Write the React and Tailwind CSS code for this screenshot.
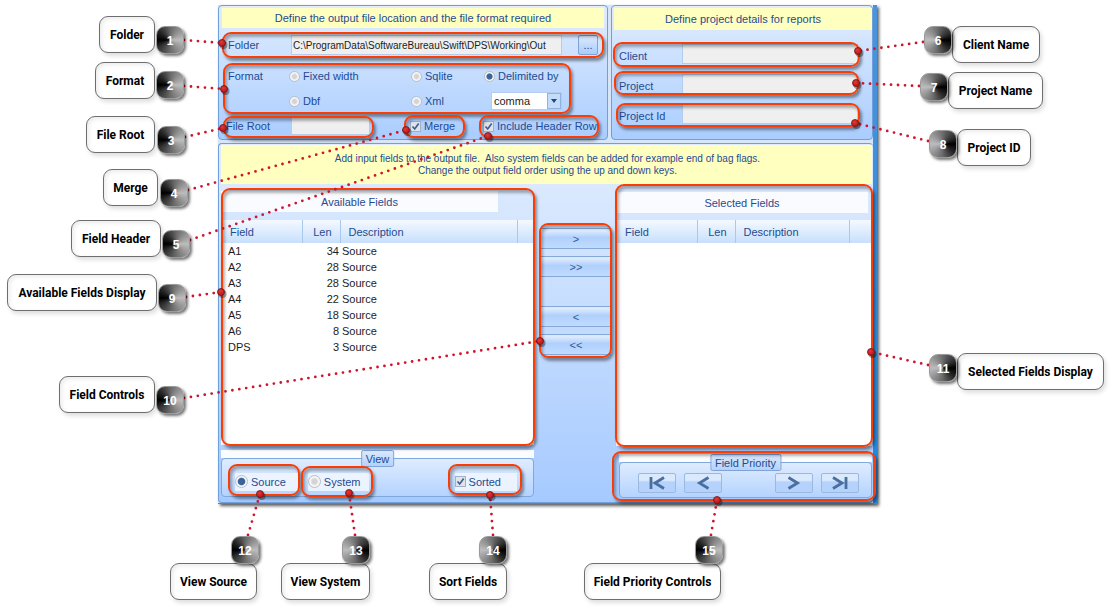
import React from "react";

const callouts = [
  { n: 1, text: "Folder", box: "left-[99px] top-4 w-14", badge: "left-[156px] top-[26px]", dark: "left", line: [184, 40, 222, 43] },
  { n: 2, text: "Format", box: "left-[95px] top-[62px] w-[60px]", badge: "left-[156px] top-[71px]", dark: "left", line: [184, 86, 224, 89] },
  { n: 3, text: "File Root", box: "left-[86px] top-[116px] w-[69px]", badge: "left-[157px] top-[126px]", dark: "left", line: [185, 137, 223, 128] },
  { n: 4, text: "Merge", box: "left-[103px] top-[169px] w-[55px]", badge: "left-[160px] top-[179px]", dark: "left", line: [188, 190, 406, 130] },
  { n: 5, text: "Field Header", box: "left-[71px] top-[220px] w-[90px]", badge: "left-[162px] top-[230px]", dark: "left", line: [190, 240, 488, 136] },
  { n: 9, text: "Available Fields Display", box: "left-[7px] top-[274px] w-[150px]", badge: "left-[158px] top-[284px]", dark: "left", line: [186, 297, 221, 292] },
  { n: 10, text: "Field Controls", box: "left-[59px] top-[376px] w-24", badge: "left-[156px] top-[386px]", dark: "left", line: [184, 398, 540, 341] },
  { n: 6, text: "Client Name", box: "left-[952px] top-[26px] w-[88px]", badge: "left-[924px] top-[26px]", dark: "right", line: [923, 42, 858, 51] },
  { n: 7, text: "Project Name", box: "left-[948px] top-[72px] w-[95px]", badge: "left-[920px] top-[73px]", dark: "right", line: [919, 86, 856, 83] },
  { n: 8, text: "Project ID", box: "left-[957px] top-[129px] w-[74px]", badge: "left-[929px] top-[130px]", dark: "right", line: [928, 141, 855, 123] },
  { n: 11, text: "Selected Fields Display", box: "left-[957px] top-[353px] w-[147px]", badge: "left-[929px] top-[354px]", dark: "right", line: [928, 365, 871, 352] },
  { n: 12, text: "View Source", box: "left-[170px] top-[563px] w-[87px]", badge: "left-[231px] top-[536px]", dark: "left", line: [248, 535, 260, 494] },
  { n: 13, text: "View System", box: "left-[281px] top-[563px] w-[89px]", badge: "left-[342px] top-[536px]", dark: "right", line: [355, 535, 349, 493] },
  { n: 14, text: "Sort Fields", box: "left-[429px] top-[563px] w-[78px]", badge: "left-[479px] top-[536px]", dark: "right", line: [493, 535, 490, 495] },
  { n: 15, text: "Field Priority Controls", box: "left-[584px] top-[563px] w-[137px]", badge: "left-[695px] top-[536px]", dark: "left", line: [711, 535, 717, 500] },
];

const outlines = [
  "left-[222px] top-8 w-[382px] h-[26px]",
  "left-[223px] top-[63px] w-[348px] h-[51px]",
  "left-[223px] top-[116px] w-[151px] h-[22px]",
  "left-[404px] top-[115px] w-[61px] h-[23px]",
  "left-[479px] top-[115px] w-[120px] h-[23px]",
  "left-[613px] top-[42px] w-[247px] h-[25px]",
  "left-[614px] top-[71px] w-[245px] h-6",
  "left-[616px] top-[103px] w-[244px] h-6",
  "left-[221px] top-[188px] w-[314px] h-[258px]",
  "left-[539px] top-[223px] w-[73px] h-[135px]",
  "left-[615px] top-[184px] w-[258px] h-[263px]",
  "left-[612px] top-[451px] w-[264px] h-[50px]",
  "left-[228px] top-[464px] w-[72px] h-8",
  "left-[301px] top-[466px] w-[72px] h-[31px]",
  "left-[448px] top-[464px] w-[74px] h-[31px]",
];

const rows = [
  ["A1", 34], ["A2", 28], ["A3", 28], ["A4", 22], ["A5", 18], ["A6", 8], ["DPS", 3],
];

const panel = "border-[#6f9fdc] rounded-[4px] bg-linear-to-b";
const banner = "bg-[#ffffbf] flex items-center justify-center text-center";
const groupTitle = "absolute top-0 left-1/2 flex h-[17px] -translate-x-1/2 items-center whitespace-nowrap rounded-[2px] border border-[#7fa3d8] bg-linear-to-b from-[#d9e8fd] to-[#b5d2fb] px-1";
const groupFrame = "flex items-center rounded-[4px] border border-[#7fa8dc] bg-linear-to-b from-[#dfecfe] to-[#b4d3ff]";

function Radio({ name, label, checked, className = "", size = "size-[11px]" }) {
  return (
    <label className={`flex items-center gap-[3px] whitespace-nowrap ${className}`}>
      <input
        type="radio"
        name={name}
        defaultChecked={checked}
        className={`appearance-none shrink-0 rounded-full border border-[#b5bfcc] bg-[radial-gradient(circle,#d4d4d4_0_30%,#f6f6f6_55%)] checked:bg-[radial-gradient(circle,#3d6499_0_42%,#f6f6f6_55%)] ${size}`}
      />
      {label}
    </label>
  );
}

function Check({ label, className = "" }) {
  return (
    <label className={`flex items-center gap-[3px] whitespace-nowrap ${className}`}>
      <span className="grid shrink-0 size-[11px]">
        <input type="checkbox" defaultChecked className="peer appearance-none col-start-1 row-start-1 size-[11px] border border-[#9fb0c8] bg-[#e0e4ea]" />
        <svg viewBox="0 0 11 11" className="pointer-events-none invisible peer-checked:visible col-start-1 row-start-1 size-[11px]" fill="none" stroke="#3f5f8f" strokeWidth="1.7">
          <path d="M2.5 5.5 4.7 8 8.7 2.5" />
        </svg>
      </span>
      {label}
    </label>
  );
}

function TextField({ id, label, value = "", labelClass, inputClass }) {
  return (
    <>
      <label htmlFor={id} className={`shrink-0 whitespace-nowrap ${labelClass}`}>{label}</label>
      <input id={id} type="text" defaultValue={value} className={`min-w-0 border border-[#b4cdee] bg-[#efefef] text-[#1c1c1c] outline-none ${inputClass}`} />
    </>
  );
}

function ProjectField({ id, label }) {
  return (
    <div className="flex h-5 items-end">
      <TextField id={id} label={label} labelClass="w-[63px]" inputClass="h-5 flex-1" />
    </div>
  );
}

function FieldTable({ data, title, widths }) {
  const th = "h-[23px] p-0 font-normal border-r border-[#a9c8ee]";
  return (
    <div className="flex-1 bg-white">
      <table aria-label={title} className="w-full table-fixed border-collapse">
        <colgroup>
          <col className={widths[0]} />
          <col className={widths[1]} />
          <col className={widths[2]} />
          <col />
        </colgroup>
        <thead className="bg-linear-to-b from-[#f4f9ff] to-[#c8dffc]">
          <tr>
            <th className={`${th} pl-[9px] text-left`}>Field</th>
            <th className={`${th} pr-2 text-right`}>Len</th>
            <th className={`${th} pl-2 text-left`}>Description</th>
            <th className="p-0" />
          </tr>
        </thead>
        <tbody className="text-[#1c1c1c]">
          {data.map(([name, len]) => (
            <tr key={name} className="h-4">
              <td className="p-0 pl-[7px]">{name}</td>
              <td className="p-0 pr-px text-right">{len}</td>
              <td className="p-0 pl-0.5">Source</td>
              <td className="p-0" />
            </tr>
          ))}
        </tbody>
      </table>
    </div>
  );
}

function MoveButton({ children, className = "" }) {
  return (
    <button type="button" className={`h-[21px] w-full border-y border-[#84a8d8] bg-linear-to-b from-[#dceafd] from-10% via-[#b0d0fc] via-45% to-[#c1dbff] text-[#2f5a9c] ${className}`}>
      {children}
    </button>
  );
}

function StepButton({ label, d }) {
  return (
    <button type="button" aria-label={label} className="flex h-5 w-[38px] items-center justify-center rounded-[2px] border border-[#9bb9e0] bg-linear-to-b from-[#dbe9fd] from-35% to-[#b4d2fb] to-45%">
      <svg viewBox="0 0 16 14" className="h-3.5 w-4" fill="none" stroke="#4a6f9f" strokeWidth="2.8"><path d={d} /></svg>
    </button>
  );
}

function Window() {
  return (
    <div className="flex border-b border-[#4a86cf] bg-[#d6e5f8] shadow-[2px_2px_3px_rgba(0,0,0,0.65)]">
      <div className="flex min-w-0 flex-1 flex-col gap-[3px]">
        <div className="flex gap-[3px]">
          <section className={`${panel} flex h-[135px] min-w-0 flex-1 flex-col border from-[#e1edfd] to-[#aacdff] px-[3px] pt-0.5`}>
            <h2 className={`${banner} h-5`}>Define the output file location and the file format required</h2>
            <div className="mt-[7px] flex items-center pl-[6px]">
              <TextField id="folder" label="Folder" value="C:\ProgramData\SoftwareBureau\Swift\DPS\Working\Out" labelClass="w-[63px]" inputClass="h-5 flex-1 pl-px text-[10px]" />
              <button type="button" aria-label="Browse" className="ml-4 mr-1.5 h-5 w-5 rounded-[2px] border border-[#7ea3d6] bg-linear-to-b from-[#dceafd] to-[#a9ccfa] leading-3">...</button>
            </div>
            <fieldset className="mt-[13px] grid grid-cols-[57px_122px_73px_1fr] items-center pl-[6px]">
              <legend className="float-left h-4">Format</legend>
              <Radio name="format" label="Fixed width" className="pl-1" />
              <Radio name="format" label="Sqlite" className="pl-1" />
              <Radio name="format" label="Delimited by" checked className="pl-1" />
              <span />
              <Radio name="format" label="Dbf" className="mt-2 pl-1" />
              <Radio name="format" label="Xml" className="mt-2 pl-1" />
              <div className="relative mt-2 ml-[11px] h-[18px] w-[71px]">
                <select aria-label="Delimiter" className="h-full w-full appearance-none border border-[#b4cdee] bg-white pl-0.5 text-[#1c1c1c]">
                  <option>comma</option>
                  <option>tab</option>
                </select>
                <span className="pointer-events-none absolute top-px right-px flex h-4 w-[14px] items-center justify-center border border-[#8fb2e0] bg-[#c4dcfb]">
                  <svg viewBox="0 0 6 4" className="h-1 w-1.5" fill="#24477f"><path d="M0 0h6L3 4z" /></svg>
                </span>
              </div>
            </fieldset>
            <div className="mt-[7px] flex items-center pl-1">
              <TextField id="root" label="File Root" labelClass="w-[65px]" inputClass="h-[18px] w-[79px]" />
              <Check label="Merge" className="ml-10 w-[73px]" />
              <Check label="Include Header Row" />
            </div>
          </section>
          <section className={`${panel} flex h-[135px] w-[40%] flex-col border from-[#e1edfd] to-[#aacdff] pt-0.5 pl-0.5`}>
            <h2 className={`${banner} h-[22px]`}>Define project details for reports</h2>
            <div className="mt-3.5 flex flex-col gap-2.5 pr-3.5 pl-[5px]">
              <ProjectField id="client" label="Client" />
              <ProjectField id="project" label="Project" />
              <ProjectField id="projectId" label="Project Id" />
            </div>
          </section>
        </div>
        <section className={`${panel} flex h-[360px] flex-col border-y border-l from-[#e1edfd] to-[#a6caff] pt-px pr-px pl-0.5`}>
          <p className={`${banner} h-[39px] pl-0.5 text-[10px] leading-3`}>
            <span>Add input fields to the output file.&nbsp; Also system fields can be added for example end of bag flags.<br />Change the output field order using the up and down keys.</span>
          </p>
          <div className="flex">
            <div className="flex min-w-0 flex-[313] flex-col pt-[7px]">
              <h3 className="mb-2 mr-9 flex h-[21px] items-center justify-center bg-[#fafbfe]">Available Fields</h3>
              <div className="flex h-[225px]"><FieldTable title="Available Fields" data={rows} widths={["w-[81px]", "w-[38px]", "w-[177px]"]} /></div>
              <fieldset className="relative mt-[5px] bg-linear-to-b from-[#fbfcfe] from-[8px] to-transparent to-[8px] pt-2">
                <legend className={groupTitle}>View</legend>
                <div className={`${groupFrame} h-[39px] pt-2 pl-[13px]`}>
                  <span className="bg-[#f5f9ff]/80 py-px pr-3"><Radio name="view" label="Source" checked size="size-[13px]" /></span>
                  <span className="ml-2.5 bg-[#f5f9ff]/80 py-px pr-2"><Radio name="view" label="System" size="size-[13px]" /></span>
                  <span className="ml-auto mr-4 bg-[#f5f9ff]/80 py-px pr-4"><Check label="Sorted" /></span>
                </div>
              </fieldset>
            </div>
            <div className="ml-[7px] mr-[5px] flex w-[70px] flex-col pt-11">
              <MoveButton>&gt;</MoveButton>
              <MoveButton className="mt-[7px]">&gt;&gt;</MoveButton>
              <MoveButton className="mt-[29px]">&lt;</MoveButton>
              <MoveButton className="mt-[7px]">&lt;&lt;</MoveButton>
            </div>
            <div className="flex min-w-0 flex-[256] flex-col pt-2">
              <h3 className="mb-[7px] mr-1 flex h-[21px] items-center justify-center bg-[#fafbfe]">Selected Fields</h3>
              <div className="flex h-[226px]"><FieldTable title="Selected Fields" data={[]} widths={["w-[81px]", "w-[38px]", "w-[114px]"]} /></div>
              <fieldset className="relative mt-2 ml-[3px] bg-linear-to-b from-[#fbfcfe] from-[8px] to-transparent to-[8px] pt-2">
                <legend className={groupTitle}>Field Priority</legend>
                <div className={`${groupFrame} h-9 gap-2 pt-1.5 pr-3 pl-[18px]`}>
                  <StepButton label="Move to top" d="M2 1v12M15 1.5 6 7l9 5.5" />
                  <StepButton label="Move up" d="M13.5 1.5 4.5 7l9 5.5" />
                  <span className="flex-1" />
                  <StepButton label="Move down" d="M2.5 1.5 11.5 7l-9 5.5" />
                  <StepButton label="Move to bottom" d="M14 1v12M1 1.5 10 7l-9 5.5" />
                </div>
              </fieldset>
            </div>
          </div>
        </section>
      </div>
      <div className="w-1 bg-linear-to-b from-[#4a94dc] to-[#1f86dc]" />
    </div>
  );
}

function Annotations() {
  return (
    <div className="pointer-events-none absolute inset-0">
      {outlines.map((place) => (
        <div key={place} className={`absolute rounded-[9px] border-2 border-[#fa3c05] shadow-[2px_3px_3px_rgba(0,0,0,0.4),inset_2px_3px_3px_rgba(0,0,0,0.3)] ${place}`} />
      ))}
      <svg className="absolute inset-0 h-full w-full" aria-hidden="true">
        <defs>
          <radialGradient id="dot" cx="40%" cy="35%">
            <stop offset="0" stopColor="#e23a3a" />
            <stop offset="1" stopColor="#c41c1c" />
          </radialGradient>
        </defs>
        {callouts.map(({ n, line: [x1, y1, x2, y2] }) => (
          <g key={n}>
            <line x1={x1} y1={y1} x2={x2} y2={y2} stroke="#d0142c" strokeWidth="2.8" strokeLinecap="round" strokeDasharray="0 7" />
            <circle cx={x2 + 1.5} cy={y2 + 2} r="4" fill="#000" opacity="0.35" />
            <circle cx={x2} cy={y2} r="3.5" fill="url(#dot)" stroke="#6d1414" strokeWidth="0.8" />
          </g>
        ))}
      </svg>
      {callouts.map(({ n, text, box, badge, dark }) => (
        <React.Fragment key={n}>
          <div className={`absolute flex h-[37px] items-center justify-center rounded-[9px] border border-[#6e6e6e] bg-white font-[Roboto,sans-serif] text-xs font-bold whitespace-nowrap text-black shadow-[2px_3px_4px_rgba(0,0,0,0.13),inset_2px_2px_4px_rgba(0,0,0,0.08)] ${box}`}>{text}</div>
          <div className={`absolute flex size-7 items-center justify-center rounded-[9px] border border-[#9a9a9a] pt-0.5 text-xs font-bold text-white shadow-[2px_2px_3px_rgba(0,0,0,0.55)] ${dark === "left" ? "bg-[conic-gradient(from_90deg,#bdbdbd,#6a6a6a_25%,#333_40%,#000_50%,#222_60%,#666_75%,#bdbdbd)]" : "bg-[conic-gradient(from_270deg,#bdbdbd,#6a6a6a_25%,#333_40%,#000_50%,#222_60%,#666_75%,#bdbdbd)]"} ${badge}`}>{n}</div>
        </React.Fragment>
      ))}
    </div>
  );
}

export default function App() {
  return (
    <main className="relative min-h-screen overflow-hidden bg-white pt-[5px] pr-[238px] pl-[218px] font-['Liberation_Sans',Arial,sans-serif] text-[11px] leading-4 text-[#1f4b91]">
      <Window />
      <Annotations />
    </main>
  );
}
